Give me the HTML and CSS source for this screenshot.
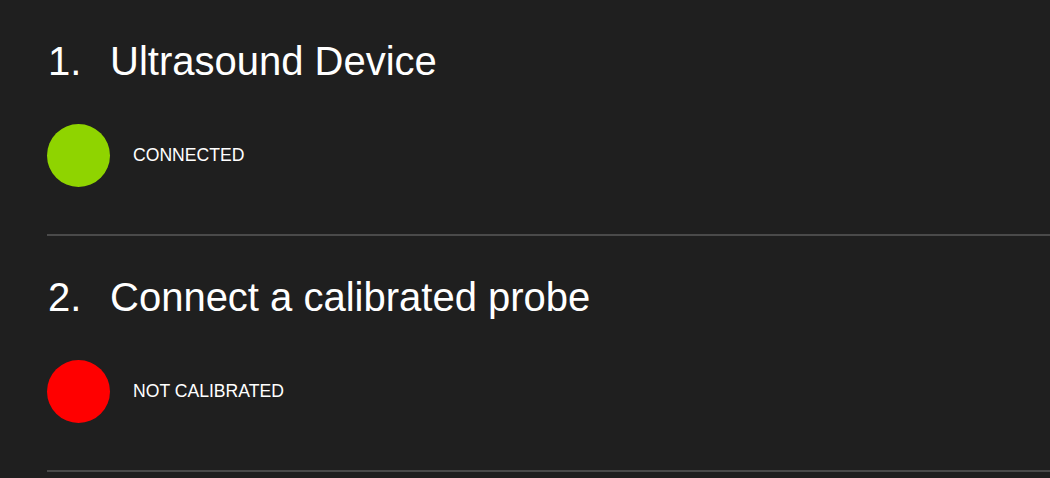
FILE: index.html
```html
<!DOCTYPE html>
<html>
<head>
<meta charset="utf-8">
<link rel="stylesheet" href="styles.css">
</head>
<body>
<main class="steps">
  <section class="step">
    <h2 class="step-title"><span class="step-num">1.</span><span>Ultrasound Device</span></h2>
    <div class="status">
      <span class="dot dot-ok"></span>
      <span class="status-text">CONNECTED</span>
    </div>
  </section>
  <section class="step">
    <h2 class="step-title"><span class="step-num">2.</span><span>Connect a calibrated probe</span></h2>
    <div class="status">
      <span class="dot dot-bad"></span>
      <span class="status-text">NOT CALIBRATED</span>
    </div>
  </section>
</main>
</body>
</html>
```
FILE: styles.css
```css
html, body {
  margin: 0;
  padding: 0;
  background: #1f1f1f;
  color: #ffffff;
  font-family: "Liberation Sans", Arial, sans-serif;
}

.steps {
  padding-left: 47px;
}

.step {
  padding-top: 37px;
  padding-bottom: 47px;
  border-bottom: 2px solid #4a4a4a;
}

.step-title {
  display: flex;
  margin: 0;
  font-size: 40px;
  font-weight: normal;
  line-height: 48px;
}

.step-num {
  width: 62px;
  padding-left: 1px;
  flex: none;
}

.status {
  display: flex;
  align-items: center;
  gap: 23px;
  margin-top: 39px;
}

.dot {
  width: 63px;
  height: 63px;
  border-radius: 50%;
  flex: none;
}

.dot-ok {
  background: #8fd400;
}

.dot-bad {
  background: #ff0000;
}

.status-text {
  font-size: 17.6px;
}
```
